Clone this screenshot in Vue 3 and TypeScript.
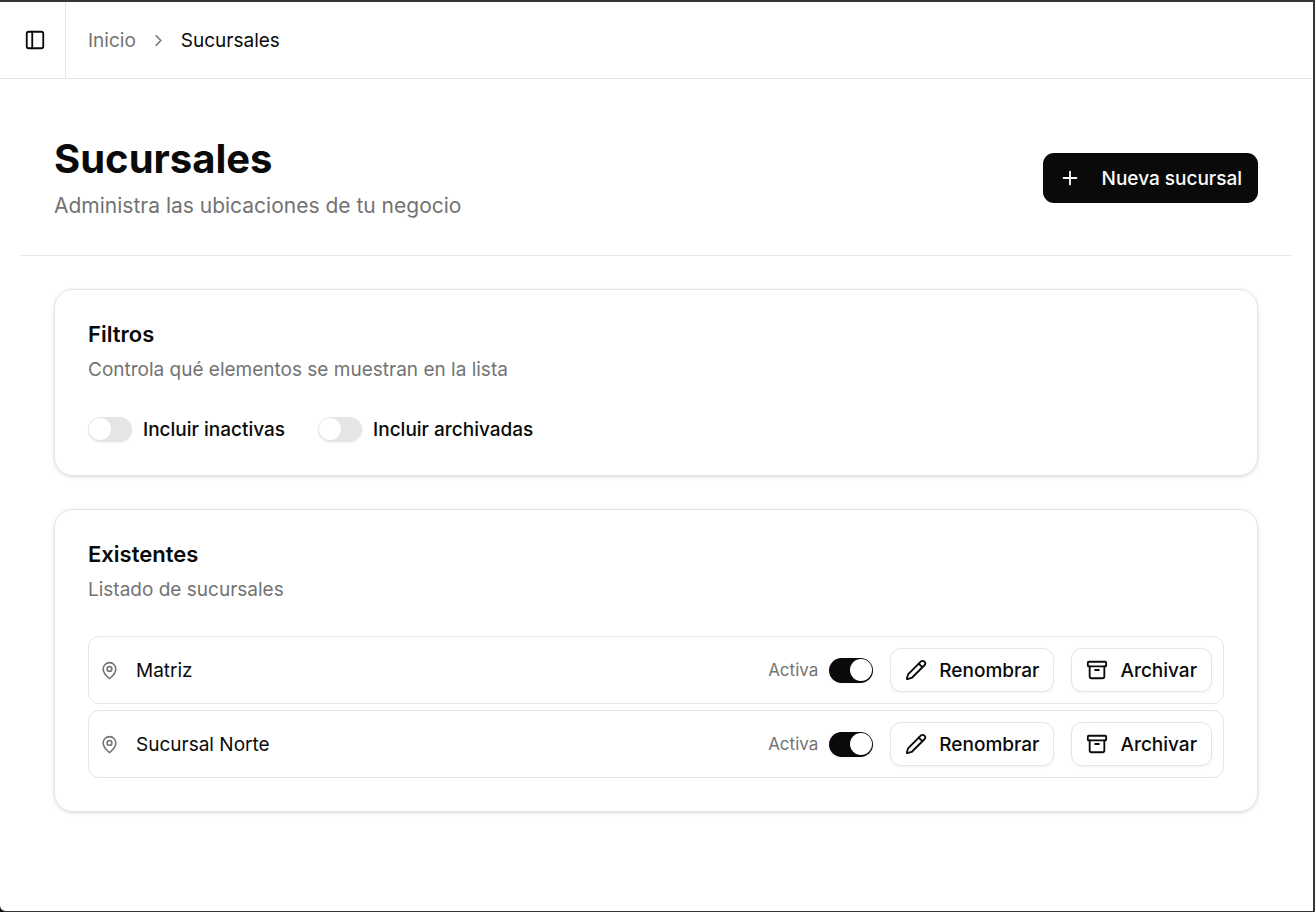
<script setup lang="ts">
import { reactive, ref } from 'vue'

interface Branch {
  id: number
  name: string
  active: boolean
}

const includeInactive = ref(false)
const includeArchived = ref(false)

const branches = reactive<Branch[]>([
  { id: 1, name: 'Matriz', active: true },
  { id: 2, name: 'Sucursal Norte', active: true },
])
</script>

<template>
  <div class="window">
    <header class="topbar">
      <div class="topbar-side">
        <button class="panel-toggle" type="button" aria-label="Alternar barra lateral">
          <svg class="icon" viewBox="0 0 24 24" aria-hidden="true">
            <rect x="3" y="3" width="18" height="18" rx="2" />
            <path d="M9 3v18" />
          </svg>
        </button>
      </div>
      <nav class="breadcrumb" aria-label="Ruta">
        <a class="crumb" href="#">Inicio</a>
        <svg class="icon icon-small muted" viewBox="0 0 24 24" aria-hidden="true">
          <path d="m9 18 6-6-6-6" />
        </svg>
        <span aria-current="page">Sucursales</span>
      </nav>
    </header>

    <main class="page">
      <section class="page-head">
        <div class="page-heading">
          <h1>Sucursales</h1>
          <p>Administra las ubicaciones de tu negocio</p>
        </div>
        <button class="primary" type="button">
          <svg class="icon" viewBox="0 0 24 24" aria-hidden="true">
            <path d="M5 12h14M12 5v14" />
          </svg>
          Nueva sucursal
        </button>
      </section>

      <div class="cards">
        <section class="card">
          <h2>Filtros</h2>
          <p class="description">Controla qué elementos se muestran en la lista</p>
          <div class="filters">
            <label class="filter">
              <input v-model="includeInactive" class="switch" type="checkbox" role="switch" />
              Incluir inactivas
            </label>
            <label class="filter">
              <input v-model="includeArchived" class="switch" type="checkbox" role="switch" />
              Incluir archivadas
            </label>
          </div>
        </section>

        <section class="card">
          <h2>Existentes</h2>
          <p class="description">Listado de sucursales</p>
          <ul class="branches">
            <li v-for="branch in branches" :key="branch.id" class="branch">
              <svg class="icon icon-small muted" viewBox="0 0 24 24" aria-hidden="true">
                <path
                  d="M20 10c0 4.993-5.539 10.193-7.399 11.799a1 1 0 0 1-1.202 0C9.539 20.193 4 14.993 4 10a8 8 0 0 1 16 0"
                />
                <circle cx="12" cy="10" r="3" />
              </svg>
              <span class="branch-name">{{ branch.name }}</span>
              <div class="actions">
                <label class="status">
                  Activa
                  <input v-model="branch.active" class="switch" type="checkbox" role="switch" />
                </label>
                <button class="outline" type="button">
                  <svg class="icon" viewBox="0 0 24 24" aria-hidden="true">
                    <path
                      d="M21.174 6.812a1 1 0 0 0-3.986-3.987L3.842 16.174a2 2 0 0 0-.5.83l-1.321 4.352a.5.5 0 0 0 .623.622l4.353-1.32a2 2 0 0 0 .83-.497z"
                    />
                    <path d="m15 5 4 4" />
                  </svg>
                  Renombrar
                </button>
                <button class="outline" type="button">
                  <svg class="icon" viewBox="0 0 24 24" aria-hidden="true">
                    <rect x="2" y="3" width="20" height="5" rx="1" />
                    <path d="M4 8v11a2 2 0 0 0 2 2h12a2 2 0 0 0 2-2V8M10 12h4" />
                  </svg>
                  Archivar
                </button>
              </div>
            </li>
          </ul>
        </section>
      </div>
    </main>
  </div>
</template>

<style>
body {
  background: #0a0a0a;
}
</style>

<style scoped>
.window {
  box-sizing: border-box;
  min-height: 100vh;
  border: solid #37353a;
  border-width: 2px 2px 1px 0;
  border-bottom-left-radius: 6px;
  background: #fff;
  color: #0a0a0a;
  font-family: Inter, 'Liberation Sans', sans-serif;
  font-size: 19px;
  line-height: 27px;
}

h1,
h2,
p,
ul {
  margin: 0;
  padding: 0;
}

button {
  font: inherit;
  color: inherit;
  cursor: pointer;
}

.icon {
  flex: none;
  width: 22px;
  height: 22px;
  fill: none;
  stroke: currentColor;
  stroke-width: 2;
  stroke-linecap: round;
  stroke-linejoin: round;
}

.icon-small {
  width: 19px;
  height: 19px;
}

.muted {
  color: #737373;
}

.topbar {
  display: flex;
  height: 76px;
  border-bottom: 1px solid #e5e5e5;
}

.topbar-side {
  display: flex;
  align-items: center;
  padding: 0 8px 0 13px;
  border-right: 1px solid #e5e5e5;
}

.panel-toggle {
  display: flex;
  align-items: center;
  justify-content: center;
  width: 44px;
  height: 44px;
  padding: 0;
  border: 0;
  border-radius: 11px;
  background: none;
}

.breadcrumb {
  display: flex;
  align-items: center;
  gap: 13px;
  padding-left: 22px;
}

.crumb {
  color: #737373;
  text-decoration: none;
}

.page {
  padding: 22px 22px 33px 21px;
}

.page-head {
  display: flex;
  align-items: center;
  justify-content: space-between;
  padding: 33px;
  border-bottom: 1px solid #e5e5e5;
}

.page-heading {
  display: grid;
  gap: 5px;
}

h1 {
  font-size: 40px;
  font-weight: 700;
  line-height: 50px;
}

.page-heading p {
  color: #737373;
  font-size: 21px;
  line-height: 33px;
}

.primary {
  display: flex;
  align-items: center;
  gap: 21px;
  height: 50px;
  padding: 0 16px;
  border: 0;
  border-radius: 11px;
  background: #0a0a0a;
  color: #fafafa;
  font-weight: 500;
}

.cards {
  display: grid;
  gap: 33px;
  padding: 33px;
}

.card {
  padding: 33px;
  border: 1px solid #e5e5e5;
  border-radius: 19px;
  box-shadow: 0 1px 4px rgb(0 0 0 / 10%), 0 1px 3px -1px rgb(0 0 0 / 10%);
}

h2 {
  font-size: 22px;
  font-weight: 600;
  line-height: 22px;
}

.description {
  margin: 11px 0 33px;
  color: #737373;
}

.filters {
  display: flex;
  gap: 33px;
  height: 26px;
}

.filter,
.status {
  display: flex;
  align-items: center;
  gap: 11px;
}

.filter {
  font-weight: 500;
}

.switch {
  display: flex;
  align-items: center;
  appearance: none;
  box-sizing: border-box;
  flex: none;
  width: 44px;
  height: 25px;
  margin: 0;
  padding: 0 1px;
  border-radius: 13px;
  background: #e5e5e5;
  box-shadow: 0 1px 3px rgb(0 0 0 / 5%);
  cursor: pointer;
}

.switch::before {
  content: '';
  width: 22px;
  height: 22px;
  border-radius: 50%;
  background: #fff;
}

.switch:checked {
  justify-content: flex-end;
  background: #0a0a0a;
}

.branches {
  display: grid;
  gap: 6px;
  list-style: none;
}

.branch {
  display: flex;
  align-items: center;
  gap: 17px;
  padding: 11px;
  border: 1px solid #e5e5e5;
  border-radius: 11px;
}

.branch-name {
  flex: 1;
}

.actions {
  display: flex;
  align-items: center;
  gap: 17px;
}

.status {
  color: #737373;
  font-size: 17px;
}

.outline {
  display: flex;
  align-items: center;
  gap: 12px;
  height: 44px;
  padding: 0 14px;
  border: 1px solid #e5e5e5;
  border-radius: 11px;
  background: #fff;
  box-shadow: 0 1px 3px rgb(0 0 0 / 5%);
  font-weight: 500;
}
</style>
